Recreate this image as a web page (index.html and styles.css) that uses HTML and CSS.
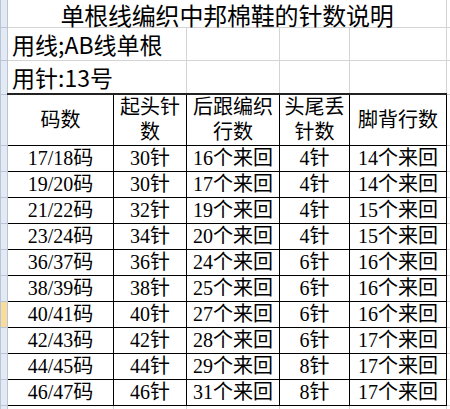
FILE: index.html
```html
<!DOCTYPE html>
<html lang="zh-CN">
<head>
<meta charset="utf-8">
<title>单根线编织中邦棉鞋的针数说明</title>
<link rel="stylesheet" href="styles.css">
</head>
<body>
<table class="sheet">
  <colgroup>
    <col class="w-rh"><col class="w-1"><col class="w-2"><col class="w-3"><col class="w-4"><col class="w-5"><col class="w-6">
  </colgroup>
  <tr class="r-title">
    <td class="rh"></td>
    <td class="title" colspan="5">单根线编织中邦棉鞋的针数说明</td>
    <td></td>
  </tr>
  <tr class="r-info">
    <td class="rh"></td>
    <td class="info" colspan="2">用线;AB线单根</td>
    <td></td><td></td><td></td><td></td>
  </tr>
  <tr class="r-info">
    <td class="rh"></td>
    <td class="info" colspan="2">用针:13号</td>
    <td></td><td></td><td></td><td></td>
  </tr>
  <tr class="r-head">
    <td class="rh"></td>
    <td class="c">码数</td>
    <td class="c">起头针<br>数</td>
    <td class="c">后跟编织<br>行数</td>
    <td class="c">头尾丢<br>针数</td>
    <td class="c">脚背行数</td>
    <td></td>
  </tr>
  <tr class="r-data"><td class="rh"></td><td class="c">17/18码</td><td class="c">30针</td><td class="c">16个来回</td><td class="c">4针</td><td class="c">14个来回</td><td></td></tr>
  <tr class="r-data"><td class="rh"></td><td class="c">19/20码</td><td class="c">30针</td><td class="c">17个来回</td><td class="c">4针</td><td class="c">14个来回</td><td></td></tr>
  <tr class="r-data"><td class="rh"></td><td class="c">21/22码</td><td class="c">32针</td><td class="c">19个来回</td><td class="c">4针</td><td class="c">15个来回</td><td></td></tr>
  <tr class="r-data"><td class="rh"></td><td class="c">23/24码</td><td class="c">34针</td><td class="c">20个来回</td><td class="c">4针</td><td class="c">15个来回</td><td></td></tr>
  <tr class="r-data"><td class="rh"></td><td class="c">36/37码</td><td class="c">36针</td><td class="c">24个来回</td><td class="c">6针</td><td class="c">16个来回</td><td></td></tr>
  <tr class="r-data"><td class="rh"></td><td class="c">38/39码</td><td class="c">38针</td><td class="c">25个来回</td><td class="c">6针</td><td class="c">16个来回</td><td></td></tr>
  <tr class="r-data"><td class="rh sel"></td><td class="c">40/41码</td><td class="c">40针</td><td class="c">27个来回</td><td class="c">6针</td><td class="c">16个来回</td><td></td></tr>
  <tr class="r-data"><td class="rh"></td><td class="c">42/43码</td><td class="c">42针</td><td class="c">28个来回</td><td class="c">6针</td><td class="c">17个来回</td><td></td></tr>
  <tr class="r-data"><td class="rh"></td><td class="c">44/45码</td><td class="c">44针</td><td class="c">29个来回</td><td class="c">8针</td><td class="c">17个来回</td><td></td></tr>
  <tr class="r-data"><td class="rh"></td><td class="c">46/47码</td><td class="c">46针</td><td class="c">31个来回</td><td class="c">8针</td><td class="c">17个来回</td><td></td></tr>
  <tr class="r-tail"><td class="rh"></td><td></td><td></td><td></td><td></td><td></td><td></td></tr>
</table>
</body>
</html>
```
FILE: styles.css
```css
html, body {
  margin: 0;
  padding: 0;
  background: #fff;
}
body {
  width: 450px;
  height: 409px;
  overflow: hidden;
  font-family: "Liberation Serif", "Noto Sans CJK SC", serif;
  color: #000;
}
.sheet {
  border-collapse: collapse;
  table-layout: fixed;
  width: 451px;
}
.w-rh { width: 7px; }
.w-1 { width: 106px; }
.w-2 { width: 73px; }
.w-3 { width: 93px; }
.w-4 { width: 70px; }
.w-5 { width: 97px; }
.w-6 { width: 5px; }

.sheet td {
  border: 1px solid #d4d4d4;
  padding: 0;
  white-space: nowrap;
  overflow: hidden;
}
.sheet tr:first-child td {
  border-top: 0;
}
.sheet td.rh {
  background: #e4eaf3;
  border: 1px solid #b8c5d8;
}
.sheet td.rh.sel {
  background: #f8dc9c;
}
.r-title td { height: 27px; }
.r-info td { height: 32px; }
.r-head td { height: 50px; }
.r-data td { height: 25px; }
.r-tail td { height: 10px; }

.sheet td.title {
  overflow: visible;
  text-align: center;
  vertical-align: top;
  height: 24px;
  padding-top: 3px;
  font-family: "Noto Sans CJK SC", sans-serif;
  font-size: 24px;
  font-weight: 400;
  line-height: 24px;
  letter-spacing: -0.2px;
}
.sheet td.info {
  font-family: "Noto Sans CJK SC", sans-serif;
  font-size: 23px;
  font-weight: 400;
  line-height: 30px;
  padding-left: 4px;
}
.sheet td.c {
  border: 1px solid #000;
  text-align: center;
  vertical-align: middle;
  font-size: 20px;
  line-height: 25px;
}
.r-head td.c {
  border-top: 2px solid #222;
  line-height: 25px;
}
```
